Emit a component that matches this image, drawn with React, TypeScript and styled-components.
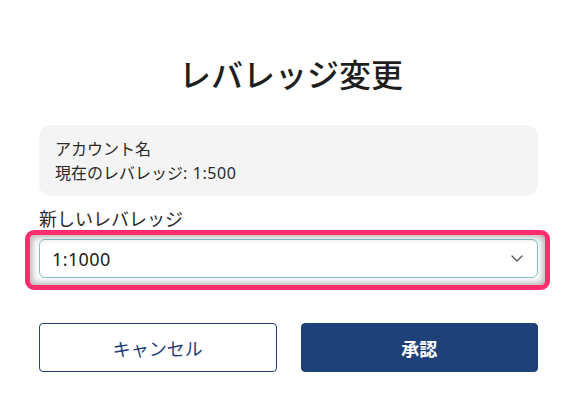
import React from "react";
import styled, { createGlobalStyle } from "styled-components";

const GlobalStyle = createGlobalStyle`
  html, body {
    margin: 0;
    padding: 0;
    background: #ffffff;
  }
  body {
    font-family: "Noto Sans", "Noto Sans CJK JP", sans-serif;
    color: #222222;
  }
`;

const Page = styled.div`
  width: 499px;
  padding: 51px 48px 0 39px;
  display: flex;
  flex-direction: column;
`;

const Title = styled.h1`
  margin: 0 0 26px 0;
  font-size: 32px;
  line-height: 48px;
  font-weight: 500;
  text-align: center;
  color: #1f1f1f;
  padding-left: 5px;
`;

const InfoBox = styled.div`
  background: #f4f4f4;
  border-radius: 12px;
  padding: 12px 16px 11px 16px;
  display: flex;
  flex-direction: column;
`;

const InfoLine = styled.div`
  font-size: 16px;
  line-height: 24px;
  color: #2a2a2a;
`;

const Num = styled.span`
  letter-spacing: 0.6px;
`;

const Label = styled.div`
  margin-top: 10px;
  font-size: 18px;
  line-height: 27px;
  color: #2a2a2a;
`;

const SelectWrap = styled.div`
  position: relative;
  margin-top: 6px;
`;

const SelectBox = styled.div`
  height: 37px;
  border: 1px solid #86c3c9;
  border-radius: 6px;
  background: #ffffff;
  display: flex;
  align-items: center;
  justify-content: space-between;
  padding: 0 14px 0 12px;
  font-size: 18px;
  letter-spacing: 0.4px;
  color: #1c1c1c;
`;

const Highlight = styled.div`
  position: absolute;
  left: -14px;
  right: -12px;
  top: -9px;
  bottom: -12px;
  border: 5px solid #ff2d6d;
  border-radius: 9px;
  box-shadow: inset 0 0 7px 2px rgba(0, 0, 0, 0.32);
  pointer-events: none;
`;

const Actions = styled.div`
  margin-top: 45px;
  display: grid;
  grid-template-columns: 1fr 1fr;
  gap: 24px;
`;

const Button = styled.button<{ $primary?: boolean }>`
  height: 49px;
  border-radius: 4px;
  border: 1px solid #1e4179;
  background: ${(p) => (p.$primary ? "#1e4179" : "#ffffff")};
  color: ${(p) => (p.$primary ? "#ffffff" : "#1e4179")};
  font-family: "Noto Sans", "Noto Sans CJK JP", sans-serif;
  font-size: 18px;
  font-weight: ${(p) => (p.$primary ? 700 : 400)};
  cursor: pointer;
`;

const Chevron = () => (
  <svg width="12" height="7" viewBox="0 0 12 7" fill="none">
    <path d="M1 1L6 6L11 1" stroke="#555" strokeWidth="1.3" strokeLinecap="round" strokeLinejoin="round" />
  </svg>
);

export default function App() {
  return (
    <>
      <GlobalStyle />
      <Page>
        <Title>レバレッジ変更</Title>
        <InfoBox>
          <InfoLine>アカウント名</InfoLine>
          <InfoLine>
            現在のレバレッジ<Num>: 1:500</Num>
          </InfoLine>
        </InfoBox>
        <Label>新しいレバレッジ</Label>
        <SelectWrap>
          <SelectBox>
            <span>1:1000</span>
            <Chevron />
          </SelectBox>
          <Highlight />
        </SelectWrap>
        <Actions>
          <Button>キャンセル</Button>
          <Button $primary>承認</Button>
        </Actions>
      </Page>
    </>
  );
}
